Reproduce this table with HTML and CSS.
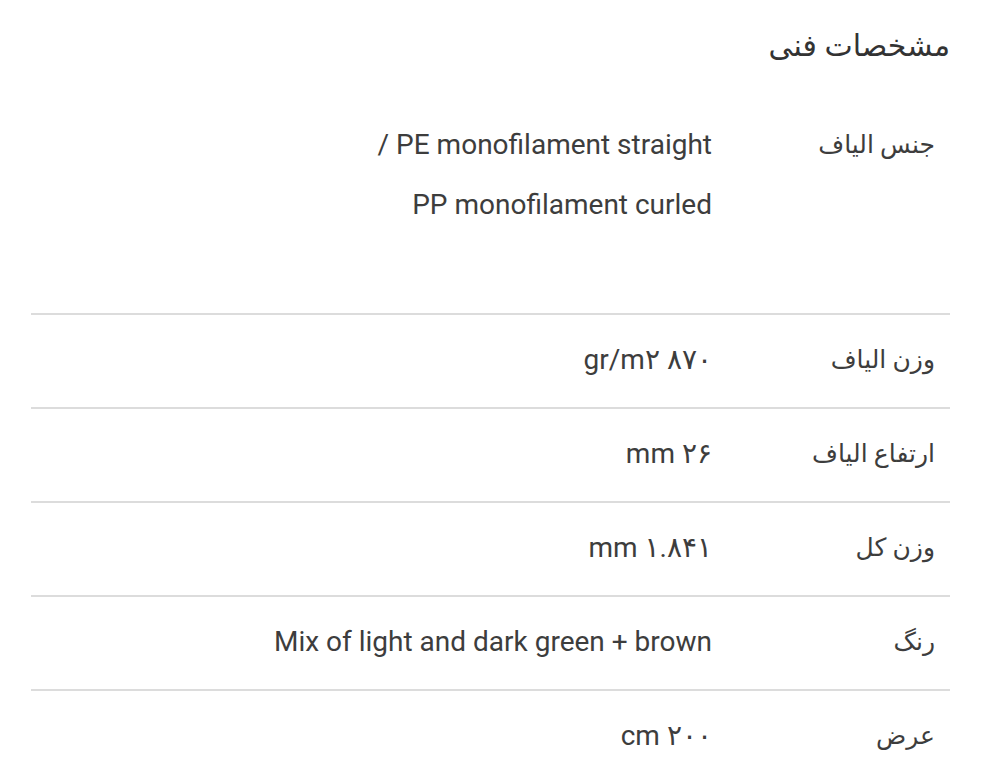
FILE: index.html
```html
<!DOCTYPE html>
<html lang="fa" dir="rtl">
<head>
<meta charset="utf-8">
<title>مشخصات فنی</title>
<link rel="stylesheet" href="styles.css">
</head>
<body>
<div class="page">
  <h2 class="title">مشخصات فنی</h2>
  <div class="specs">
    <div class="row first">
      <div class="label">جنس الیاف</div>
      <div class="value">
        <p class="line">PE monofilament straight /</p>
        <p class="line">PP monofilament curled</p>
      </div>
    </div>
    <div class="row">
      <div class="label">وزن الیاف</div>
      <div class="value">۸۷۰ gr/m۲</div>
    </div>
    <div class="row">
      <div class="label">ارتفاع الیاف</div>
      <div class="value">۲۶ mm</div>
    </div>
    <div class="row">
      <div class="label">وزن کل</div>
      <div class="value">۱.۸۴۱ mm</div>
    </div>
    <div class="row">
      <div class="label">رنگ</div>
      <div class="value">Mix of light and dark green + brown</div>
    </div>
    <div class="row">
      <div class="label">عرض</div>
      <div class="value">۲۰۰ cm</div>
    </div>
  </div>
</div>
</body>
</html>
```
FILE: styles.css
```css
html, body {
  margin: 0;
  padding: 0;
  background: #fff;
}
body {
  font-family: Roboto, "DejaVu Sans", sans-serif;
  color: #3d3d3d;
  direction: rtl;
}
.page {
  padding: 26px 32px 0 31px;
}
.title {
  margin: 0 0 34px 0;
  font-size: 30px;
  line-height: 40px;
  font-weight: normal;
  color: #333;
}
.specs {
  display: flex;
  flex-direction: column;
}
.row {
  display: grid;
  grid-template-columns: 238px 1fr;
  border-top: 2px solid #dcdcdc;
  padding: 30px 0 32px 0;
  line-height: 30px;
}
.row.first {
  border-top: none;
  padding-bottom: 0;
}
.label {
  padding-right: 15px;
  text-align: right;
  font-size: 25px;
}
.value {
  text-align: right;
  font-size: 28px;
}
.line {
  margin: 0 0 30px 0;
}
.line:last-child {
  margin-bottom: 93px;
}
```
